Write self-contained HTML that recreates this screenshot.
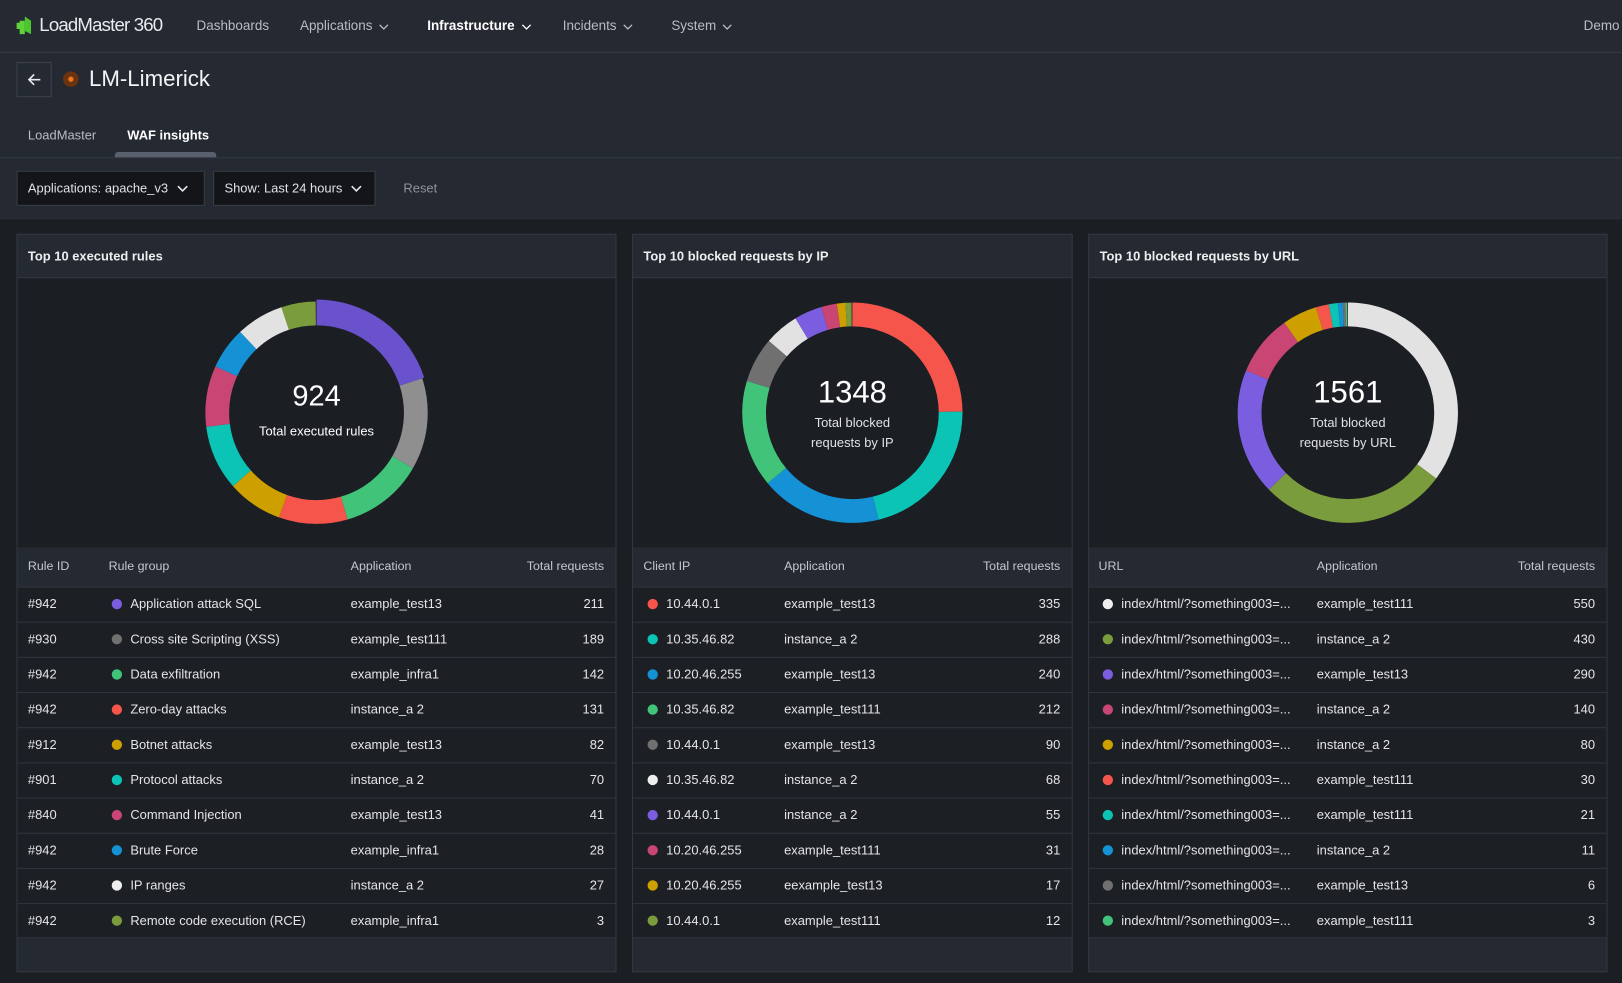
<!DOCTYPE html>
<html><head><meta charset="utf-8"><style>
*{box-sizing:border-box;margin:0;padding:0}
html,body{width:1622px;height:983px;overflow:hidden;background:#1b1e23}
body{font-family:"Liberation Sans",sans-serif;color:#e6e8eb}
#w{position:absolute;left:0;top:0;width:1568px;height:950px;transform:scale(1.0344);transform-origin:0 0;background:#1b1e23}
.abs{position:absolute}
.top{left:0;top:0;width:1568px;height:211px;background:#252932}
.hl{position:absolute;left:0;width:1568px;height:1px;background:#353a44}
.nav{position:absolute;top:17px;font-size:13px;color:#b8bcc4;white-space:nowrap}
.nav svg{vertical-align:middle;margin-left:6px}
.sel{position:absolute;top:165px;height:34px;background:#131518;border:1px solid #3a3f48;color:#dfe2e6;font-size:12.5px;padding:0 10px;line-height:32px;white-space:nowrap}
.sel svg{vertical-align:middle;margin-left:8px}
.panel{position:absolute;top:226px;height:714px;background:#252932;border:1px solid #333842}
.ph{height:42px;line-height:42px;padding-left:10px;font-size:12.5px;font-weight:bold;color:#eceef0;border-bottom:1px solid #333842}
.chart{height:260px;background:#1b1e23;position:relative}
.chart svg{position:absolute;left:50%;top:50%;transform:translate(-50%,-50%)}
.ctr{position:absolute;left:0;right:0;text-align:center;color:#fff}
.th{height:38px;position:relative;font-size:12px;color:#c3c7ce}
.row{height:34px;position:relative;background:#1c1f24;border-top:1px solid #30343d;font-size:12.5px;color:#e3e5e8}
.row:last-child{border-bottom:1px solid #30343d}
.c{position:absolute;top:0;line-height:37px;white-space:nowrap}
.row .c{line-height:32px}
.r{text-align:right}
.d{display:inline-block;width:10px;height:10px;border-radius:50%;vertical-align:-1px;margin-right:8px}
</style></head><body><div id="w">
<div class="abs top"></div>
<div class="hl" style="top:50px"></div>
<div class="hl" style="top:152px"></div>
<div class="hl" style="top:211px;background:#2c3038"></div>
<svg class="abs" style="left:16px;top:14px" width="20" height="20" viewBox="0 0 20 20"><path d="M3 6h5v13H3z" fill="#5fd13a"/><path d="M8 2l6 4v13l-6-3z" fill="#4cc52e"/><path d="M0 8h4v6H0z" fill="#5fd13a"/></svg>
<div class="abs" style="left:38px;top:14px;font-size:18px;color:#e9ebee;letter-spacing:-0.8px">LoadMaster 360</div>
<div class="nav" style="left:190px">Dashboards</div>
<div class="nav" style="left:290px">Applications<svg width="10" height="6"><path d="M1 1l4 4 4-4" stroke="#b8bcc4" fill="none" stroke-width="1.3"/></svg></div>
<div class="nav" style="left:413px;color:#fff;font-weight:bold">Infrastructure<svg width="10" height="6"><path d="M1 1l4 4 4-4" stroke="#fff" fill="none" stroke-width="1.3"/></svg></div>
<div class="nav" style="left:544px">Incidents<svg width="10" height="6"><path d="M1 1l4 4 4-4" stroke="#b8bcc4" fill="none" stroke-width="1.3"/></svg></div>
<div class="nav" style="left:649px">System<svg width="10" height="6"><path d="M1 1l4 4 4-4" stroke="#b8bcc4" fill="none" stroke-width="1.3"/></svg></div>
<div class="nav" style="left:1531px">Demo</div>
<div class="abs" style="left:16px;top:60px;width:34px;height:34px;border:1px solid #3d424c"></div>
<svg class="abs" style="left:25px;top:69px" width="16" height="16"><path d="M14 8H3M8 3L3 8l5 5" stroke="#e6e8eb" stroke-width="1.6" fill="none"/></svg>
<div class="abs" style="left:61px;top:69px;width:15px;height:15px;border-radius:50%;background:#6b3310"></div>
<div class="abs" style="left:66px;top:74px;width:5px;height:5px;border-radius:50%;background:#f07a1a"></div>
<div class="abs" style="left:86px;top:64px;font-size:21.5px;color:#f2f3f5">LM-Limerick</div>
<div class="abs" style="left:27px;top:124px;font-size:12.5px;color:#b8bcc4">LoadMaster</div>
<div class="abs" style="left:123px;top:124px;font-size:12.5px;color:#fff;font-weight:bold">WAF insights</div>
<div class="abs" style="left:111px;top:147px;width:98px;height:5px;background:#59616e;border-radius:3px 3px 0 0"></div>
<div class="sel" style="left:16px;width:182px">Applications: apache_v3<svg width="11" height="7"><path d="M1 1l4.5 4.5L10 1" stroke="#e6e8eb" fill="none" stroke-width="1.5"/></svg></div>
<div class="sel" style="left:206px;width:157px">Show: Last 24 hours<svg width="11" height="7"><path d="M1 1l4.5 4.5L10 1" stroke="#e6e8eb" fill="none" stroke-width="1.5"/></svg></div>
<div class="abs" style="left:390px;top:175px;font-size:12.5px;color:#8d929b">Reset</div>

<div class="panel" style="left:16px;width:580px">
<div class="ph">Top 10 executed rules</div>
<div class="chart">
<svg width="240" height="240" viewBox="-120 -120 240 240"><g transform="rotate(-90)" fill="none" stroke-width="23">
<circle r="96" pathLength="360" stroke="#8f8f8f" stroke-dasharray="48 360" stroke-dashoffset="-72"/>
<circle r="96" pathLength="360" stroke="#41c37a" stroke-dasharray="44 360" stroke-dashoffset="-120"/>
<circle r="96" pathLength="360" stroke="#f5554a" stroke-dasharray="36 360" stroke-dashoffset="-164"/>
<circle r="96" pathLength="360" stroke="#cda000" stroke-dasharray="29 360" stroke-dashoffset="-200"/>
<circle r="96" pathLength="360" stroke="#0bc4b6" stroke-dasharray="34 360" stroke-dashoffset="-229"/>
<circle r="96" pathLength="360" stroke="#c94574" stroke-dasharray="32 360" stroke-dashoffset="-263"/>
<circle r="96" pathLength="360" stroke="#1592d6" stroke-dasharray="22 360" stroke-dashoffset="-295"/>
<circle r="96" pathLength="360" stroke="#e2e2e2" stroke-dasharray="25 360" stroke-dashoffset="-317"/>
<circle r="96" pathLength="360" stroke="#7a9c3c" stroke-dasharray="18 360" stroke-dashoffset="-342"/>
<circle r="97" pathLength="360" stroke="#6a52cc" stroke-width="25" stroke-dasharray="72 360" stroke-dashoffset="0"/>
</g></svg>
<div class="ctr" style="top:98px;font-size:28px">924</div>
<div class="ctr" style="top:141px;font-size:12.5px">Total executed rules</div>
</div>
<div class="th"><div class="c" style="left:10px">Rule ID</div><div class="c" style="left:88px">Rule group</div><div class="c" style="left:322px">Application</div><div class="c r" style="right:11px">Total requests</div></div>
<div class="row"><div class="c" style="left:10px">#942</div><div class="c" style="left:91px"><span class="d" style="background:#7b5ee0"></span>Application attack SQL</div><div class="c" style="left:322px">example_test13</div><div class="c r" style="right:11px">211</div></div>
<div class="row"><div class="c" style="left:10px">#930</div><div class="c" style="left:91px"><span class="d" style="background:#707070"></span>Cross site Scripting (XSS)</div><div class="c" style="left:322px">example_test111</div><div class="c r" style="right:11px">189</div></div>
<div class="row"><div class="c" style="left:10px">#942</div><div class="c" style="left:91px"><span class="d" style="background:#41c37a"></span>Data exfiltration</div><div class="c" style="left:322px">example_infra1</div><div class="c r" style="right:11px">142</div></div>
<div class="row"><div class="c" style="left:10px">#942</div><div class="c" style="left:91px"><span class="d" style="background:#f5554a"></span>Zero-day attacks</div><div class="c" style="left:322px">instance_a 2</div><div class="c r" style="right:11px">131</div></div>
<div class="row"><div class="c" style="left:10px">#912</div><div class="c" style="left:91px"><span class="d" style="background:#cda000"></span>Botnet attacks</div><div class="c" style="left:322px">example_test13</div><div class="c r" style="right:11px">82</div></div>
<div class="row"><div class="c" style="left:10px">#901</div><div class="c" style="left:91px"><span class="d" style="background:#0bc4b6"></span>Protocol attacks</div><div class="c" style="left:322px">instance_a 2</div><div class="c r" style="right:11px">70</div></div>
<div class="row"><div class="c" style="left:10px">#840</div><div class="c" style="left:91px"><span class="d" style="background:#c94574"></span>Command Injection</div><div class="c" style="left:322px">example_test13</div><div class="c r" style="right:11px">41</div></div>
<div class="row"><div class="c" style="left:10px">#942</div><div class="c" style="left:91px"><span class="d" style="background:#1592d6"></span>Brute Force</div><div class="c" style="left:322px">example_infra1</div><div class="c r" style="right:11px">28</div></div>
<div class="row"><div class="c" style="left:10px">#942</div><div class="c" style="left:91px"><span class="d" style="background:#eeeeee"></span>IP ranges</div><div class="c" style="left:322px">instance_a 2</div><div class="c r" style="right:11px">27</div></div>
<div class="row"><div class="c" style="left:10px">#942</div><div class="c" style="left:91px"><span class="d" style="background:#7a9c3c"></span>Remote code execution (RCE)</div><div class="c" style="left:322px">example_infra1</div><div class="c r" style="right:11px">3</div></div>
</div>

<div class="panel" style="left:611px;width:426px">
<div class="ph">Top 10 blocked requests by IP</div>
<div class="chart">
<svg width="240" height="240" viewBox="-120 -120 240 240"><g transform="rotate(-90)" fill="none" stroke-width="23">
<circle r="95" pathLength="360" stroke="#f5554a" stroke-dasharray="89.5 360" stroke-dashoffset="0"/>
<circle r="95" pathLength="360" stroke="#0bc4b6" stroke-dasharray="76.9 360" stroke-dashoffset="-89.5"/>
<circle r="95" pathLength="360" stroke="#1592d6" stroke-dasharray="64.1 360" stroke-dashoffset="-166.4"/>
<circle r="95" pathLength="360" stroke="#41c37a" stroke-dasharray="56.6 360" stroke-dashoffset="-230.5"/>
<circle r="95" pathLength="360" stroke="#707070" stroke-dasharray="24 360" stroke-dashoffset="-287.1"/>
<circle r="95" pathLength="360" stroke="#e2e2e2" stroke-dasharray="18.2 360" stroke-dashoffset="-311.1"/>
<circle r="95" pathLength="360" stroke="#7b5ee0" stroke-dasharray="14.7 360" stroke-dashoffset="-329.3"/>
<circle r="95" pathLength="360" stroke="#c94574" stroke-dasharray="8.3 360" stroke-dashoffset="-344"/>
<circle r="95" pathLength="360" stroke="#cda000" stroke-dasharray="4.5 360" stroke-dashoffset="-352.3"/>
<circle r="95" pathLength="360" stroke="#7a9c3c" stroke-dasharray="3.2 360" stroke-dashoffset="-356.8"/>
</g></svg>
<div class="ctr" style="top:94px;font-size:30px">1348</div>
<div class="ctr" style="top:131px;font-size:12.5px;line-height:19px;color:#dfe2e6">Total blocked<br>requests by IP</div>
</div>
<div class="th"><div class="c" style="left:10px">Client IP</div><div class="c" style="left:146px">Application</div><div class="c r" style="right:11px">Total requests</div></div>
<div class="row"><div class="c" style="left:14px"><span class="d" style="background:#f5554a"></span>10.44.0.1</div><div class="c" style="left:146px">example_test13</div><div class="c r" style="right:11px">335</div></div>
<div class="row"><div class="c" style="left:14px"><span class="d" style="background:#0bc4b6"></span>10.35.46.82</div><div class="c" style="left:146px">instance_a 2</div><div class="c r" style="right:11px">288</div></div>
<div class="row"><div class="c" style="left:14px"><span class="d" style="background:#1592d6"></span>10.20.46.255</div><div class="c" style="left:146px">example_test13</div><div class="c r" style="right:11px">240</div></div>
<div class="row"><div class="c" style="left:14px"><span class="d" style="background:#41c37a"></span>10.35.46.82</div><div class="c" style="left:146px">example_test111</div><div class="c r" style="right:11px">212</div></div>
<div class="row"><div class="c" style="left:14px"><span class="d" style="background:#707070"></span>10.44.0.1</div><div class="c" style="left:146px">example_test13</div><div class="c r" style="right:11px">90</div></div>
<div class="row"><div class="c" style="left:14px"><span class="d" style="background:#eeeeee"></span>10.35.46.82</div><div class="c" style="left:146px">instance_a 2</div><div class="c r" style="right:11px">68</div></div>
<div class="row"><div class="c" style="left:14px"><span class="d" style="background:#7b5ee0"></span>10.44.0.1</div><div class="c" style="left:146px">instance_a 2</div><div class="c r" style="right:11px">55</div></div>
<div class="row"><div class="c" style="left:14px"><span class="d" style="background:#c94574"></span>10.20.46.255</div><div class="c" style="left:146px">example_test111</div><div class="c r" style="right:11px">31</div></div>
<div class="row"><div class="c" style="left:14px"><span class="d" style="background:#cda000"></span>10.20.46.255</div><div class="c" style="left:146px">eexample_test13</div><div class="c r" style="right:11px">17</div></div>
<div class="row"><div class="c" style="left:14px"><span class="d" style="background:#7a9c3c"></span>10.44.0.1</div><div class="c" style="left:146px">example_test111</div><div class="c r" style="right:11px">12</div></div>
</div>

<div class="panel" style="left:1052px;width:502px">
<div class="ph">Top 10 blocked requests by URL</div>
<div class="chart">
<svg width="240" height="240" viewBox="-120 -120 240 240"><g transform="rotate(-90)" fill="none" stroke-width="23">
<circle r="95" pathLength="360" stroke="#e2e2e2" stroke-dasharray="126.8 360" stroke-dashoffset="0"/>
<circle r="95" pathLength="360" stroke="#7a9c3c" stroke-dasharray="99.2 360" stroke-dashoffset="-126.8"/>
<circle r="95" pathLength="360" stroke="#7b5ee0" stroke-dasharray="66.9 360" stroke-dashoffset="-226"/>
<circle r="95" pathLength="360" stroke="#c94574" stroke-dasharray="32.3 360" stroke-dashoffset="-292.9"/>
<circle r="95" pathLength="360" stroke="#cda000" stroke-dasharray="18.4 360" stroke-dashoffset="-325.2"/>
<circle r="95" pathLength="360" stroke="#f5554a" stroke-dasharray="6.9 360" stroke-dashoffset="-343.6"/>
<circle r="95" pathLength="360" stroke="#0bc4b6" stroke-dasharray="4.8 360" stroke-dashoffset="-350.5"/>
<circle r="95" pathLength="360" stroke="#1592d6" stroke-dasharray="2.5 360" stroke-dashoffset="-355.3"/>
<circle r="95" pathLength="360" stroke="#707070" stroke-dasharray="1.4 360" stroke-dashoffset="-357.8"/>
<circle r="95" pathLength="360" stroke="#41c37a" stroke-dasharray="0.8 360" stroke-dashoffset="-359.2"/>
</g></svg>
<div class="ctr" style="top:94px;font-size:30px">1561</div>
<div class="ctr" style="top:131px;font-size:12.5px;line-height:19px;color:#dfe2e6">Total blocked<br>requests by URL</div>
</div>
<div class="th"><div class="c" style="left:9px">URL</div><div class="c" style="left:220px">Application</div><div class="c r" style="right:11px">Total requests</div></div>
<div class="row"><div class="c" style="left:13px"><span class="d" style="background:#eeeeee"></span>index/html/?something003=...</div><div class="c" style="left:220px">example_test111</div><div class="c r" style="right:11px">550</div></div>
<div class="row"><div class="c" style="left:13px"><span class="d" style="background:#7a9c3c"></span>index/html/?something003=...</div><div class="c" style="left:220px">instance_a 2</div><div class="c r" style="right:11px">430</div></div>
<div class="row"><div class="c" style="left:13px"><span class="d" style="background:#7b5ee0"></span>index/html/?something003=...</div><div class="c" style="left:220px">example_test13</div><div class="c r" style="right:11px">290</div></div>
<div class="row"><div class="c" style="left:13px"><span class="d" style="background:#c94574"></span>index/html/?something003=...</div><div class="c" style="left:220px">instance_a 2</div><div class="c r" style="right:11px">140</div></div>
<div class="row"><div class="c" style="left:13px"><span class="d" style="background:#cda000"></span>index/html/?something003=...</div><div class="c" style="left:220px">instance_a 2</div><div class="c r" style="right:11px">80</div></div>
<div class="row"><div class="c" style="left:13px"><span class="d" style="background:#f5554a"></span>index/html/?something003=...</div><div class="c" style="left:220px">example_test111</div><div class="c r" style="right:11px">30</div></div>
<div class="row"><div class="c" style="left:13px"><span class="d" style="background:#0bc4b6"></span>index/html/?something003=...</div><div class="c" style="left:220px">example_test111</div><div class="c r" style="right:11px">21</div></div>
<div class="row"><div class="c" style="left:13px"><span class="d" style="background:#1592d6"></span>index/html/?something003=...</div><div class="c" style="left:220px">instance_a 2</div><div class="c r" style="right:11px">11</div></div>
<div class="row"><div class="c" style="left:13px"><span class="d" style="background:#707070"></span>index/html/?something003=...</div><div class="c" style="left:220px">example_test13</div><div class="c r" style="right:11px">6</div></div>
<div class="row"><div class="c" style="left:13px"><span class="d" style="background:#41c37a"></span>index/html/?something003=...</div><div class="c" style="left:220px">example_test111</div><div class="c r" style="right:11px">3</div></div>
</div>
</div></body></html>
